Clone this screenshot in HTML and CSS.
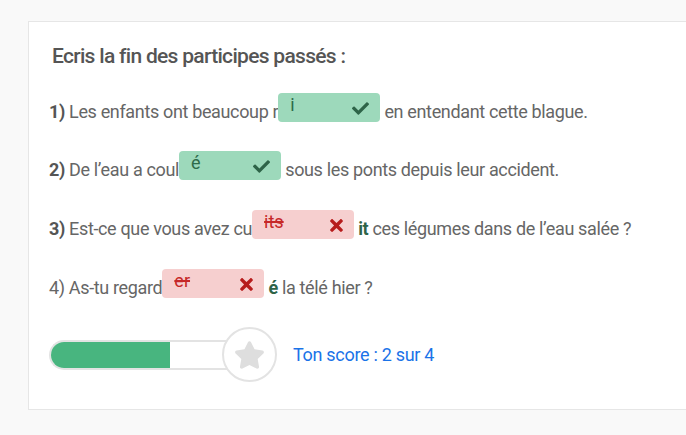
FILE: index.html
```html
<!DOCTYPE html>
<html lang="fr">
<head>
<meta charset="utf-8">
<title>Participes passés</title>
<link rel="stylesheet" href="styles.css">
</head>
<body>
<div class="card">
  <h2 class="title">Ecris la fin des participes passés :</h2>
  <div class="questions">
    <p class="q"><b class="num">1)</b> Les enfants ont beaucoup r<span class="ans ok"><span class="val">i</span><svg class="ico-check" viewBox="0 65 512 382"><path d="M173.9 439.4l-166.4-166.4c-10-10-10-26.2 0-36.2l36.2-36.2c10-10 26.2-10 36.2 0L192 312.7 432.1 72.6c10-10 26.2-10 36.2 0l36.2 36.2c10 10 10 26.2 0 36.2l-294.4 294.4c-10 10-26.2 10-36.2 0z"/></svg></span> en entendant cette blague.</p>
    <p class="q"><b class="num">2)</b> De l’eau a coul<span class="ans ok"><span class="val">é</span><svg class="ico-check" viewBox="0 65 512 382"><path d="M173.9 439.4l-166.4-166.4c-10-10-10-26.2 0-36.2l36.2-36.2c10-10 26.2-10 36.2 0L192 312.7 432.1 72.6c10-10 26.2-10 36.2 0l36.2 36.2c10 10 10 26.2 0 36.2l-294.4 294.4c-10 10-26.2 10-36.2 0z"/></svg></span> sous les ponts depuis leur accident.</p>
    <p class="q"><b class="num">3)</b> Est-ce que vous avez cu<span class="ans bad"><s class="val">its</s><svg class="ico-x" viewBox="0 77 352 358"><path d="M242.7 256l100.1-100.1c12.3-12.3 12.3-32.2 0-44.5l-22.2-22.2c-12.3-12.3-32.2-12.3-44.5 0L176 189.3 75.9 89.2c-12.3-12.3-32.2-12.3-44.5 0L9.2 111.5c-12.3 12.3-12.3 32.2 0 44.5L109.3 256 9.2 356.1c-12.3 12.3-12.3 32.2 0 44.5l22.2 22.2c12.3 12.3 32.2 12.3 44.5 0L176 322.7l100.1 100.1c12.3 12.3 32.2 12.3 44.5 0l22.2-22.2c12.3-12.3 12.3-32.2 0-44.5L242.7 256z"/></svg></span> <b class="fix">it</b> ces légumes dans de l’eau salée ?</p>
    <p class="q"><span class="num light">4)</span> As-tu regard<span class="ans bad"><s class="val">er</s><svg class="ico-x" viewBox="0 77 352 358"><path d="M242.7 256l100.1-100.1c12.3-12.3 12.3-32.2 0-44.5l-22.2-22.2c-12.3-12.3-32.2-12.3-44.5 0L176 189.3 75.9 89.2c-12.3-12.3-32.2-12.3-44.5 0L9.2 111.5c-12.3 12.3-12.3 32.2 0 44.5L109.3 256 9.2 356.1c-12.3 12.3-12.3 32.2 0 44.5l22.2 22.2c12.3 12.3 32.2 12.3 44.5 0L176 322.7l100.1 100.1c12.3 12.3 32.2 12.3 44.5 0l22.2-22.2c12.3-12.3 12.3-32.2 0-44.5L242.7 256z"/></svg></span> <b class="fix">é</b> la télé hier ?</p>
  </div>
  <div class="score">
    <div class="meter">
      <div class="track"><div class="fill" style="width: 119px"></div></div>
      <div class="badge"><svg class="ico-star" viewBox="0 0 576 512"><path d="M259.3 17.8L194 150.2 47.9 171.5c-26.2 3.8-36.7 36.1-17.7 54.6l105.7 103-25 145.5c-4.5 26.3 23.2 46 46.4 33.7L288 439.6l130.7 68.7c23.2 12.2 50.9-7.4 46.4-33.7l-25-145.5 105.7-103c19-18.5 8.5-50.8-17.7-54.6L382 150.2 316.7 17.8c-11.7-23.6-45.6-23.9-57.4 0z"/></svg></div>
    </div>
    <span class="score-text">Ton score : 2 sur 4</span>
  </div>
</div>
</body>
</html>
```
FILE: styles.css
```css
html, body {
  margin: 0;
  padding: 0;
  background: #f9f9f9;
  overflow: hidden;
}
body {
  font-family: Roboto, "Liberation Sans", sans-serif;
  color: #666;
}
.card {
  margin: 21px 0 0 28px;
  width: 720px;
  height: 389px;
  box-sizing: border-box;
  background: #fff;
  border: 1px solid #e6e6e6;
  padding: 22px 0 0 20px;
}
.title {
  margin: 0 0 0 3px;
  font-size: 21px;
  line-height: 24px;
  font-weight: 500;
  letter-spacing: -0.7px;
  color: #555;
}
.questions {
  display: flex;
  flex-direction: column;
  gap: 24px;
  margin-top: 25px;
}
.q {
  margin: 0;
  font-size: 18px;
  line-height: 30px;
  letter-spacing: -0.35px;
  color: #666;
  white-space: nowrap;
}
.q:nth-child(3) { margin-top: 1px; }
.q:nth-child(4) { margin-top: 1px; }
.num {
  font-weight: 700;
  color: #555;
}
.num.light {
  font-weight: 400;
  color: #666;
}
.ans {
  display: inline-flex;
  align-items: flex-start;
  justify-content: space-between;
  box-sizing: border-box;
  width: 102px;
  height: 29px;
  padding: 1px 11px 0 12px;
  border-radius: 4px;
  vertical-align: 7px;
  line-height: 22px;
  letter-spacing: 0;
}
.ans.ok { background: #9dd9bb; color: #2e6b4a; }
.ans.bad { background: #f6cfcf; color: #c62828; }
.val { text-decoration-thickness: 1.5px; }
.ans svg { align-self: center; }
.ico-check { width: 17px; height: 13px; fill: #2e6448; }
.ico-x { width: 13px; height: 13px; fill: #b71c1c; }
.fix { color: #2e6448; font-weight: 700; }
.score {
  display: flex;
  align-items: center;
  margin-top: 24px;
}
.meter {
  display: flex;
  align-items: center;
}
.track {
  width: 191px;
  height: 30px;
  box-sizing: border-box;
  border: 2px solid #e3e3e3;
  border-right: none;
  border-radius: 15px 0 0 15px;
  overflow: hidden;
  background: #fff;
}
.fill {
  height: 100%;
  background: #48b57f;
}
.badge {
  width: 55px;
  height: 55px;
  box-sizing: border-box;
  border: 2px solid #e3e3e3;
  border-radius: 50%;
  background: #fff;
  margin-left: -18px;
  display: flex;
  align-items: center;
  justify-content: center;
  position: relative;
}
.ico-star { width: 31px; height: 28px; fill: #dedede; }
.score-text {
  margin-left: 16px;
  color: #1a73e8;
  font-size: 18px;
  letter-spacing: -0.3px;
}
```
